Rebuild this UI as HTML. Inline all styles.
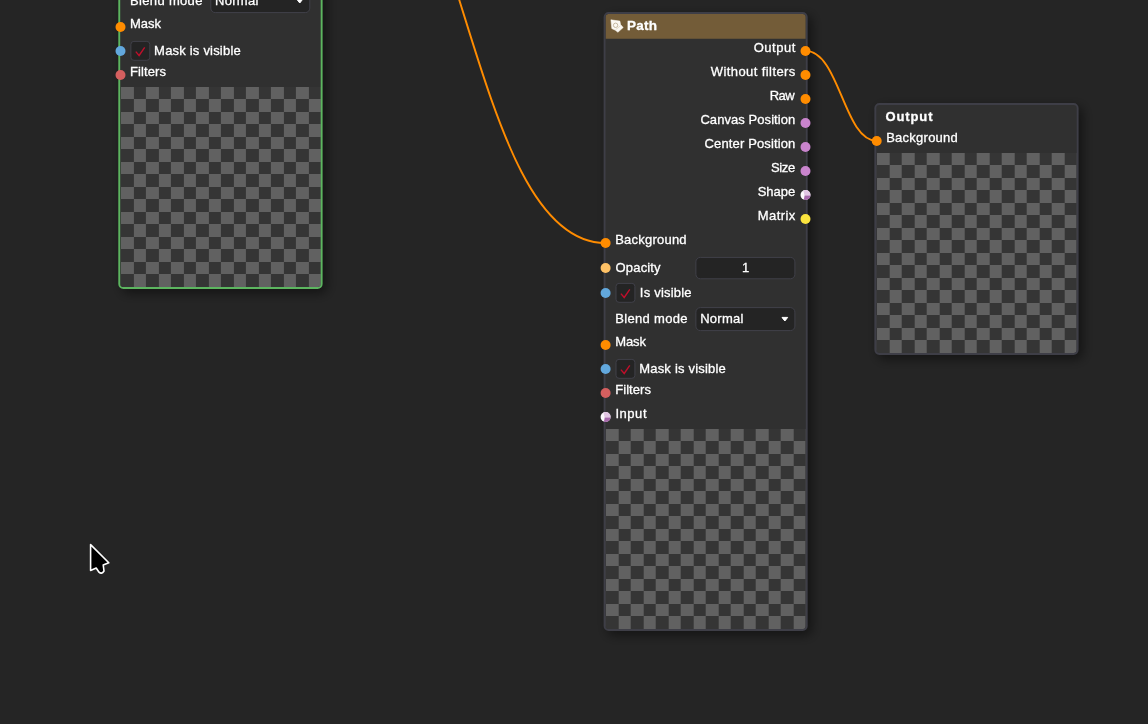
<!DOCTYPE html>
<html><head><meta charset="utf-8"><title>Node graph</title>
<style>
html,body{margin:0;padding:0;background:#252525;overflow:hidden}
svg{display:block;font-family:"Liberation Sans",sans-serif;will-change:transform}
</style></head><body>
<svg width="1148" height="724" viewBox="0 0 1148 724">
<defs>
<pattern id="chk" width="25" height="25" patternUnits="userSpaceOnUse">
<rect width="25" height="25" fill="#353535"/>
<rect width="13" height="12" fill="#616161"/>
<rect x="13" y="12" width="12" height="13" fill="#616161"/>
</pattern>
<filter id="sh" x="-20%" y="-20%" width="140%" height="140%">
<feGaussianBlur stdDeviation="6"/>
<feOffset dx="4" dy="4"/>
<feComponentTransfer><feFuncA type="linear" slope="0.5"/></feComponentTransfer>
</filter>
</defs>
<rect width="1148" height="724" fill="#252525"/>

<rect x="118.30" y="-40.00" width="204.30" height="329.00" rx="5" fill="#000" filter="url(#sh)"/>
<rect x="119.30" y="-39.00" width="202.30" height="327.00" rx="4" fill="#303030"/>
<text x="130.10" y="5.20" font-size="13" fill="#ffffff" stroke="#ffffff" stroke-width="0.3" textLength="72.3" lengthAdjust="spacing">Blend mode</text>
<rect x="210.80" y="-10.40" width="99" height="23" rx="4.5" fill="#242424" stroke="#404049" stroke-width="1"/>
<text x="215.10" y="5.00" font-size="13" fill="#ffffff" stroke="#ffffff" stroke-width="0.3" textLength="43.2" lengthAdjust="spacing">Normal</text>
<path d="M296.90 -0.60 h5.7 l-2.85 3.6z" fill="#fff" stroke="#fff" stroke-width="1" stroke-linejoin="round"/>
<text x="130.10" y="28.00" font-size="13" fill="#ffffff" stroke="#ffffff" stroke-width="0.3" textLength="30.8" lengthAdjust="spacing">Mask</text>
<rect x="130.90" y="41.40" width="18.9" height="18.9" rx="3" fill="#242424" stroke="#404049" stroke-width="1"/>
<path d="M135.80 51.60 L139.10 55.50 L144.70 47.40" fill="none" stroke="#bf0f2b" stroke-width="1.4" stroke-linejoin="miter"/>
<text x="154.10" y="55.10" font-size="13" fill="#ffffff" stroke="#ffffff" stroke-width="0.3" textLength="86.6" lengthAdjust="spacing">Mask is visible</text>
<text x="130.10" y="76.00" font-size="13" fill="#ffffff" stroke="#ffffff" stroke-width="0.3" textLength="35.8" lengthAdjust="spacing">Filters</text>
<g transform="translate(120.90 87.00)"><path d="M0 0H200V197a3 3 0 0 1 -3 3H3a3 3 0 0 1 -3 -3Z" fill="url(#chk)"/></g>
<rect x="119.25" y="-39.05" width="202.40" height="327.10" rx="4.1" fill="none" stroke="#5cb55f" stroke-width="1.9"/>
<rect x="603.60" y="12.00" width="204.10" height="619.00" rx="5" fill="#000" filter="url(#sh)"/>
<rect x="604.60" y="13.00" width="202.10" height="617.00" rx="4" fill="#303030"/>
<path d="M605.6 38.8 V17 a3 3 0 0 1 3 -3 H802.7 a3 3 0 0 1 3 3 V38.8 Z" fill="#735c38"/>
<g transform="translate(606 15)"><path d="M4.9 4.8 L13.9 6.1 L14.6 9.6 L17.2 12.5 L11.9 17.3 L9.3 15.2 L5.8 13.6 Z" fill="#fbf8f2" stroke="#fbf8f2" stroke-width="0.5" stroke-linejoin="round"/><circle cx="9.6" cy="10.3" r="2.2" fill="none" stroke="#b9aa8e" stroke-width="0.8"/><path d="M9.6 14.6 L14.4 10.9" fill="none" stroke="#cfc3ab" stroke-width="0.6"/></g>
<text x="627.00" y="30.40" font-size="13.5" fill="#ffffff" font-weight="bold" stroke="#ffffff" stroke-width="0.3" textLength="30" lengthAdjust="spacing">Path</text>
<text x="753.70" y="52.00" font-size="13" fill="#ffffff" stroke="#ffffff" stroke-width="0.3" textLength="41.6" lengthAdjust="spacing">Output</text>
<text x="710.80" y="76.00" font-size="13" fill="#ffffff" stroke="#ffffff" stroke-width="0.3" textLength="84.5" lengthAdjust="spacing">Without filters</text>
<text x="769.80" y="100.00" font-size="13" fill="#ffffff" stroke="#ffffff" stroke-width="0.3" textLength="24.8" lengthAdjust="spacing">Raw</text>
<text x="700.40" y="124.00" font-size="13" fill="#ffffff" stroke="#ffffff" stroke-width="0.3" textLength="94.9" lengthAdjust="spacing">Canvas Position</text>
<text x="704.60" y="148.00" font-size="13" fill="#ffffff" stroke="#ffffff" stroke-width="0.3" textLength="90.7" lengthAdjust="spacing">Center Position</text>
<text x="770.90" y="172.00" font-size="13" fill="#ffffff" stroke="#ffffff" stroke-width="0.3" textLength="24.4" lengthAdjust="spacing">Size</text>
<text x="757.70" y="196.00" font-size="13" fill="#ffffff" stroke="#ffffff" stroke-width="0.3" textLength="37.6" lengthAdjust="spacing">Shape</text>
<text x="757.70" y="220.00" font-size="13" fill="#ffffff" stroke="#ffffff" stroke-width="0.3" textLength="37.6" lengthAdjust="spacing">Matrix</text>
<text x="615.20" y="244.00" font-size="13" fill="#ffffff" stroke="#ffffff" stroke-width="0.3" textLength="71.4" lengthAdjust="spacing">Background</text>
<text x="615.60" y="271.60" font-size="13" fill="#ffffff" stroke="#ffffff" stroke-width="0.3" textLength="45" lengthAdjust="spacing">Opacity</text>
<rect x="695.90" y="257.40" width="99" height="21.4" rx="4.5" fill="#242424" stroke="#404049" stroke-width="1"/>
<text x="745.60" y="272.00" font-size="13" fill="#ffffff" text-anchor="middle" stroke="#ffffff" stroke-width="0.3">1</text>
<rect x="616.00" y="283.40" width="18.9" height="18.9" rx="3" fill="#242424" stroke="#404049" stroke-width="1"/>
<path d="M620.90 293.60 L624.20 297.50 L629.80 289.40" fill="none" stroke="#bf0f2b" stroke-width="1.4" stroke-linejoin="miter"/>
<text x="639.80" y="296.60" font-size="13" fill="#ffffff" stroke="#ffffff" stroke-width="0.3" textLength="51.8" lengthAdjust="spacing">Is visible</text>
<text x="615.20" y="323.20" font-size="13" fill="#ffffff" stroke="#ffffff" stroke-width="0.3" textLength="72.3" lengthAdjust="spacing">Blend mode</text>
<rect x="695.90" y="307.60" width="99" height="23" rx="4.5" fill="#242424" stroke="#404049" stroke-width="1"/>
<text x="700.20" y="323.00" font-size="13" fill="#ffffff" stroke="#ffffff" stroke-width="0.3" textLength="43.2" lengthAdjust="spacing">Normal</text>
<path d="M782.00 317.40 h5.7 l-2.85 3.6z" fill="#fff" stroke="#fff" stroke-width="1" stroke-linejoin="round"/>
<text x="615.20" y="346.00" font-size="13" fill="#ffffff" stroke="#ffffff" stroke-width="0.3" textLength="30.8" lengthAdjust="spacing">Mask</text>
<rect x="616.00" y="359.40" width="18.9" height="18.9" rx="3" fill="#242424" stroke="#404049" stroke-width="1"/>
<path d="M620.90 369.60 L624.20 373.50 L629.80 365.40" fill="none" stroke="#bf0f2b" stroke-width="1.4" stroke-linejoin="miter"/>
<text x="639.20" y="373.10" font-size="13" fill="#ffffff" stroke="#ffffff" stroke-width="0.3" textLength="86.6" lengthAdjust="spacing">Mask is visible</text>
<text x="615.20" y="394.00" font-size="13" fill="#ffffff" stroke="#ffffff" stroke-width="0.3" textLength="35.8" lengthAdjust="spacing">Filters</text>
<text x="615.40" y="418.00" font-size="13" fill="#ffffff" stroke="#ffffff" stroke-width="0.3" textLength="31.1" lengthAdjust="spacing">Input</text>
<g transform="translate(605.70 429.00)"><path d="M0 0H200V197a3 3 0 0 1 -3 3H3a3 3 0 0 1 -3 -3Z" fill="url(#chk)"/></g>
<rect x="604.55" y="12.95" width="202.20" height="617.10" rx="4.1" fill="none" stroke="#3e3e47" stroke-width="1.9"/>
<rect x="874.35" y="103.00" width="204.25" height="251.90" rx="5" fill="#000" filter="url(#sh)"/>
<rect x="875.35" y="104.00" width="202.25" height="249.90" rx="4" fill="#303030"/>
<text x="885.60" y="121.00" font-size="13" fill="#ffffff" font-weight="bold" stroke="#ffffff" stroke-width="0.3" textLength="46.9" lengthAdjust="spacing">Output</text>
<text x="886.20" y="141.80" font-size="13" fill="#ffffff" stroke="#ffffff" stroke-width="0.3" textLength="71.6" lengthAdjust="spacing">Background</text>
<g transform="translate(876.70 153.00)"><path d="M0 0H200V197a3 3 0 0 1 -3 3H3a3 3 0 0 1 -3 -3Z" fill="url(#chk)"/></g>
<rect x="875.30" y="103.95" width="202.35" height="250.00" rx="4.1" fill="none" stroke="#3e3e47" stroke-width="1.9"/>
<path d="M322.80 -211.70 C464.15 -211.70 464.15 243.00 605.50 243.00" fill="none" stroke="#ff8c00" stroke-width="1.9"/>
<path d="M805.50 50.90 C839.60 50.90 843.70 140.80 876.60 140.80" fill="none" stroke="#ff8c00" stroke-width="1.9"/>
<circle cx="120.50" cy="27.00" r="5.0" fill="#ff8c00"/>
<circle cx="120.50" cy="51.00" r="5.0" fill="#62a8dd"/>
<circle cx="120.50" cy="75.00" r="5.0" fill="#d55f5f"/>
<circle cx="805.50" cy="51.00" r="5.0" fill="#ff8c00"/>
<circle cx="805.50" cy="75.00" r="5.0" fill="#ff8c00"/>
<circle cx="805.50" cy="99.00" r="5.0" fill="#ff8c00"/>
<circle cx="805.50" cy="123.00" r="5.0" fill="#c984cd"/>
<circle cx="805.50" cy="147.00" r="5.0" fill="#c984cd"/>
<circle cx="805.50" cy="171.00" r="5.0" fill="#c984cd"/>
<g transform="translate(805.50 195.00)"><circle r="5.0" fill="#fbf8fb"/><path d="M-0.9 0.4 L-2.25 -4.45 A5.0 5.0 0 0 1 5.0 0.4 Z" fill="#e2c6e4"/><path d="M-0.9 0.4 L5.0 0.4 A5.0 5.0 0 0 1 -1.70 4.70 Z" fill="#a669ab"/></g>
<circle cx="805.50" cy="219.00" r="5.0" fill="#fbe43e"/>
<circle cx="605.60" cy="243.00" r="5.0" fill="#ff8c00"/>
<circle cx="605.60" cy="268.00" r="5.0" fill="#ffc266"/>
<circle cx="605.60" cy="293.00" r="5.0" fill="#62a8dd"/>
<circle cx="605.60" cy="345.00" r="5.0" fill="#ff8c00"/>
<circle cx="605.60" cy="369.00" r="5.0" fill="#62a8dd"/>
<circle cx="605.60" cy="393.00" r="5.0" fill="#d55f5f"/>
<g transform="translate(605.60 417.00)"><circle r="5.0" fill="#fbf8fb"/><path d="M-0.9 0.4 L-2.25 -4.45 A5.0 5.0 0 0 1 5.0 0.4 Z" fill="#e2c6e4"/><path d="M-0.9 0.4 L5.0 0.4 A5.0 5.0 0 0 1 -1.70 4.70 Z" fill="#a669ab"/></g>
<circle cx="876.70" cy="141.00" r="5.0" fill="#ff8c00"/>
<path d="M90.6 544.6 L90.6 570.4 L96.2 568 L99 572.2 Q101.6 574.6 104 571 L103.2 565 L108.8 562.8 Z" fill="#000" stroke="#fff" stroke-width="1.6" stroke-linejoin="round"/>
</svg></body></html>
